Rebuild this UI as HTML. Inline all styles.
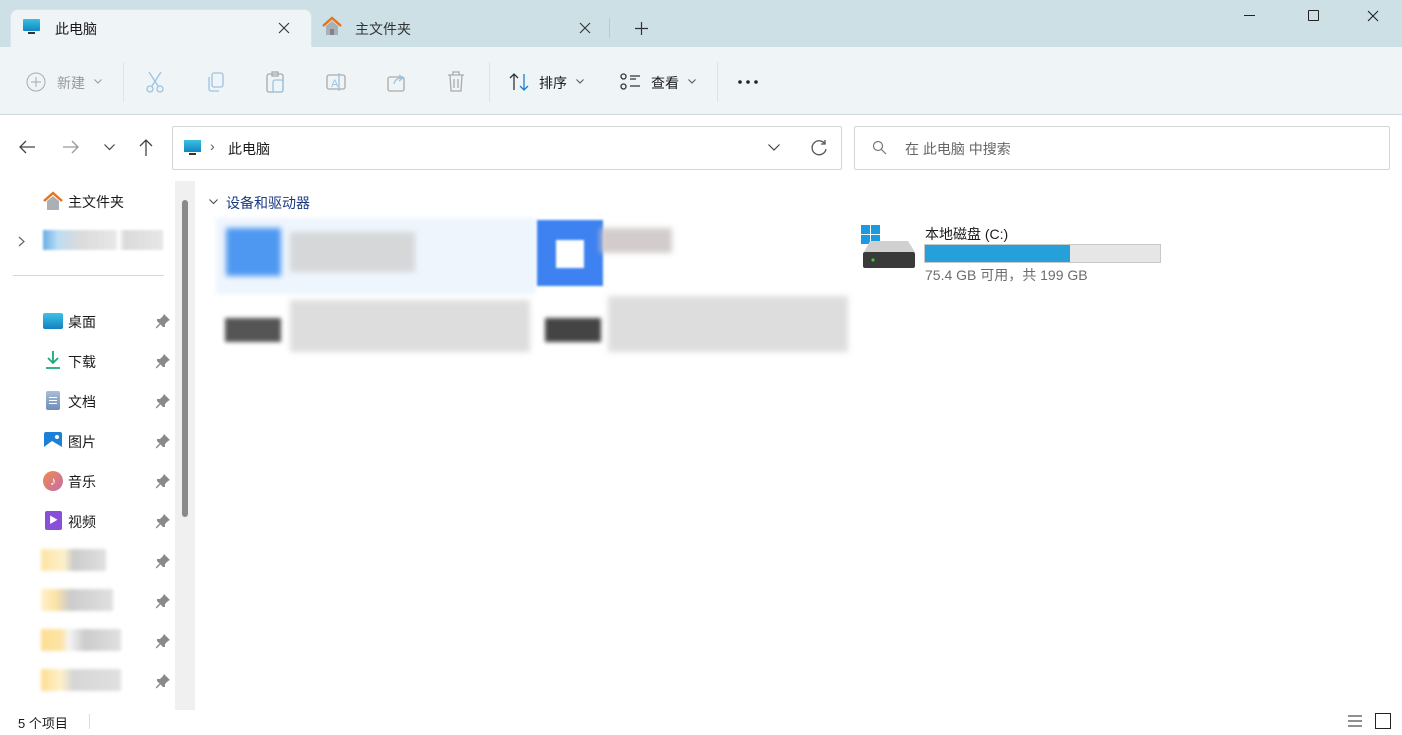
<!DOCTYPE html>
<html><head><meta charset="utf-8"><style>
*{margin:0;padding:0;box-sizing:border-box}
body{width:1402px;height:735px;overflow:hidden;background:#fff;font-family:"Liberation Sans","Noto Sans CJK SC",sans-serif;font-size:14px;color:#1a1a1a;position:relative}
.a{position:absolute}
.blk{position:absolute}
</style></head><body>
<div class="a" style="left:0;top:0;width:1402px;height:47px;background:#cde0e6"></div>
<div class="a" style="left:10px;top:9px;width:302px;height:38px;background:#eff4f7;border-radius:8px 8px 0 0;border:1px solid #d9e4ea;border-bottom:none"></div>
<div class="a" style="left:23px;top:19px;width:17px;height:12px;background:linear-gradient(#3ac0e0,#1186c4);border-radius:1px"></div>
<div class="a" style="left:28px;top:32px;width:7px;height:2px;background:#333"></div>
<div class="a" style="left:55px;top:19px;font-size:14px">此电脑</div>
<svg class="a" style="left:278px;top:22px" width="12" height="12" stroke="#333" stroke-width="1.1"><path d="M1 1L11 11M11 1L1 11"/></svg>
<svg class="a" style="left:321px;top:16px" width="22" height="20"><path d="M2 10 L11 2 L20 10" fill="none" stroke="#e8731b" stroke-width="2.5"/><path d="M5 10 V19 H17 V10 L11 5 Z" fill="#aab0b5"/><rect x="9" y="13" width="4" height="6" fill="#7d858a"/></svg>
<div class="a" style="left:355px;top:19px;color:#333">主文件夹</div>
<svg class="a" style="left:579px;top:22px" width="12" height="12" stroke="#333" stroke-width="1.1"><path d="M1 1L11 11M11 1L1 11"/></svg>
<div class="a" style="left:609px;top:18px;width:1px;height:20px;background:#b8c8cf"></div>
<svg class="a" style="left:635px;top:22px" width="13" height="13" stroke="#333" stroke-width="1.2"><path d="M6.5 0V13M0 6.5H13"/></svg>
<div class="a" style="left:1244px;top:15px;width:11px;height:1px;background:#222"></div>
<div class="a" style="left:1308px;top:10px;width:11px;height:11px;border:1px solid #222;border-radius:1px"></div>
<svg class="a" style="left:1367px;top:10px" width="12" height="12" stroke="#222" stroke-width="1.1"><path d="M1 1L11 11M11 1L1 11"/></svg>
<div class="a" style="left:0;top:47px;width:1402px;height:68px;background:#eff4f7;border-bottom:1px solid #cfd8dc"></div>
<svg class="a" style="left:26px;top:72px" width="20" height="20"><circle cx="10" cy="10" r="9" fill="none" stroke="#aaa"/><path d="M10 5V15M5 10H15" stroke="#aaa"/></svg>
<div class="a" style="left:57px;top:73px;color:#999">新建</div>
<svg class="a" style="left:94px;top:79px" width="8" height="5" fill="none" stroke="#999"><path d="M0.5 0.5L4 4L7.5 0.5"/></svg>
<div class="a" style="left:123px;top:62px;width:1px;height:40px;background:#dde3e6"></div>
<svg class="a" style="left:145px;top:70px" width="20" height="24" fill="none" stroke="#9cc3e0" stroke-width="1.3"><path d="M4 2L13 16M16 2L7 16"/><circle cx="5" cy="19" r="3"/><circle cx="15" cy="19" r="3"/></svg>
<svg class="a" style="left:205px;top:71px" width="22" height="22" fill="none" stroke="#9cc3e0" stroke-width="1.3"><rect x="7" y="2" width="11" height="14" rx="2"/><path d="M4 6V18a2 2 0 0 0 2 2H14"/></svg>
<svg class="a" style="left:265px;top:70px" width="22" height="24" fill="none" stroke="#aaa" stroke-width="1.3"><rect x="2" y="4" width="16" height="18" rx="2"/><rect x="7" y="2" width="6" height="4"/><rect x="8" y="10" width="10" height="12" rx="2" stroke="#9cc3e0"/></svg>
<svg class="a" style="left:325px;top:70px" width="22" height="24" fill="none" stroke="#aaa" stroke-width="1.3"><rect x="2" y="5" width="18" height="14" rx="2"/><text x="6" y="17" font-size="11" fill="#9cc3e0" stroke="none" font-family="Liberation Sans">A</text><path d="M14 3V21" stroke="#9cc3e0"/></svg>
<svg class="a" style="left:386px;top:71px" width="22" height="22" fill="none" stroke="#aaa" stroke-width="1.3"><rect x="2" y="6" width="16" height="14" rx="2"/><path d="M8 13C9 8 13 7 16 7M13 4L17 7L13 10" stroke="#9cc3e0"/></svg>
<svg class="a" style="left:446px;top:70px" width="20" height="24" fill="none" stroke="#aaa" stroke-width="1.3"><path d="M2 5H18M7 5V2H13V5M4 5L5 21H15L16 5M8 9V18M12 9V18"/></svg>
<div class="a" style="left:489px;top:62px;width:1px;height:40px;background:#dde3e6"></div>
<svg class="a" style="left:508px;top:72px" width="24" height="20" fill="none" stroke-width="1.3"><path d="M6 18V2M2 6L6 2L10 6" stroke="#333"/><path d="M16 2V18M12 14L16 18L20 14" stroke="#1a7fd4"/></svg>
<div class="a" style="left:539px;top:73px">排序</div>
<svg class="a" style="left:576px;top:79px" width="8" height="5" fill="none" stroke="#555"><path d="M0.5 0.5L4 4L7.5 0.5"/></svg>
<svg class="a" style="left:620px;top:72px" width="22" height="20" fill="none" stroke="#333" stroke-width="1.3"><rect x="1" y="2" width="5" height="5" rx="2.5"/><rect x="1" y="12" width="5" height="5" rx="2.5"/><path d="M10 4H20M10 14H20M10 7H16"/></svg>
<div class="a" style="left:651px;top:73px">查看</div>
<svg class="a" style="left:688px;top:79px" width="8" height="5" fill="none" stroke="#555"><path d="M0.5 0.5L4 4L7.5 0.5"/></svg>
<div class="a" style="left:717px;top:62px;width:1px;height:40px;background:#dde3e6"></div>
<svg class="a" style="left:737px;top:79px" width="22" height="6" fill="#222"><circle cx="3" cy="3" r="1.8"/><circle cx="11" cy="3" r="1.8"/><circle cx="19" cy="3" r="1.8"/></svg>
<svg class="a" style="left:18px;top:139px" width="18" height="16" fill="none" stroke="#444" stroke-width="1.3"><path d="M17 8H2M8 2L2 8L8 14"/></svg>
<svg class="a" style="left:62px;top:139px" width="18" height="16" fill="none" stroke="#999" stroke-width="1.3"><path d="M1 8H16M10 2L16 8L10 14"/></svg>
<svg class="a" style="left:104px;top:144px" width="11" height="7" fill="none" stroke="#444" stroke-width="1.2"><path d="M0.5 0.5L5.5 5.5L10.5 0.5"/></svg>
<svg class="a" style="left:138px;top:138px" width="16" height="18" fill="none" stroke="#444" stroke-width="1.3"><path d="M8 18V2M2 8L8 2L14 8"/></svg>
<div class="a" style="left:172px;top:126px;width:670px;height:44px;border:1px solid #d5d5d5;border-radius:2px"></div>
<div class="a" style="left:184px;top:140px;width:17px;height:12px;background:linear-gradient(#3ac0e0,#1186c4)"></div>
<div class="a" style="left:189px;top:153px;width:7px;height:2px;background:#333"></div>
<div class="a" style="left:210px;top:138px;color:#555">›</div>
<div class="a" style="left:228px;top:139px">此电脑</div>
<svg class="a" style="left:768px;top:144px" width="12" height="7" fill="none" stroke="#444" stroke-width="1.2"><path d="M0.5 0.5L6 6L11.5 0.5"/></svg>
<svg class="a" style="left:809px;top:138px" width="20" height="20" fill="none" stroke="#555" stroke-width="1.3"><path d="M16 6A7 7 0 1 0 17 11M16 2V6H12"/></svg>
<div class="a" style="left:854px;top:126px;width:536px;height:44px;border:1px solid #d5d5d5;border-radius:2px"></div>
<svg class="a" style="left:872px;top:140px" width="16" height="16" fill="none" stroke="#777" stroke-width="1.2"><circle cx="6" cy="6" r="4.5"/><path d="M9.5 9.5L14 14"/></svg>
<div class="a" style="left:905px;top:139px;color:#666">在 此电脑 中搜索</div>
<svg class="a" style="left:42px;top:191px" width="22" height="20"><path d="M2 10 L11 2 L20 10" fill="none" stroke="#e8731b" stroke-width="2.5"/><path d="M5 10 V19 H17 V10 L11 5 Z" fill="#aab0b5"/></svg>
<div class="a" style="left:68px;top:192px">主文件夹</div>
<svg class="a" style="left:18px;top:236px" width="7" height="11" fill="none" stroke="#666" stroke-width="1.2"><path d="M1 1L6 5.5L1 10"/></svg>
<div class="blk" style="left:43px;top:230px;width:120px;height:20px;background:linear-gradient(90deg,#2a8ce0 0,#9fcff0 12%,#ccc 30%,#ddd 60%,#fff 63%,#ccc 68%,#ddd 100%);opacity:.7;filter:blur(1px)"></div>
<div class="a" style="left:13px;top:275px;width:151px;height:1px;background:#d8d8d8"></div>
<div class="a" style="left:175px;top:181px;width:20px;height:529px;background:#f0f0f0"></div>
<div class="a" style="left:182px;top:200px;width:6px;height:317px;background:#8a8a8a;border-radius:3px"></div>
<div class="a" style="left:43px;top:313px;width:20px;height:16px;background:linear-gradient(#3cc3e6,#1580c0);border-radius:2px"></div>
<div class="a" style="left:68px;top:312px">桌面</div>
<svg class="a" style="left:45px;top:350px" width="16" height="20" fill="none" stroke="#1aa87d" stroke-width="1.8"><path d="M8 1V13M3 8L8 13L13 8M1 18H15"/></svg>
<div class="a" style="left:68px;top:352px">下载</div>
<div class="a" style="left:46px;top:391px;width:14px;height:19px;background:linear-gradient(#a8bcd6,#6f8db8);border-radius:2px"></div>
<div class="a" style="left:49px;top:397px;width:8px;height:1px;background:#fff;box-shadow:0 3px 0 #fff,0 6px 0 #fff"></div>
<div class="a" style="left:68px;top:392px">文档</div>
<svg class="a" style="left:44px;top:432px" width="18" height="18"><rect width="18" height="18" rx="2" fill="#1d80d8"/><path d="M0 15L8 9L18 15V18H0Z" fill="#fff"/><circle cx="13" cy="5" r="2" fill="#fff"/></svg>
<div class="a" style="left:68px;top:432px">图片</div>
<div class="a" style="left:43px;top:471px;width:20px;height:20px;background:linear-gradient(135deg,#ef8a50,#c46ea8);border-radius:50%;color:#fff;font-size:12px;text-align:center;line-height:20px">♪</div>
<div class="a" style="left:68px;top:472px">音乐</div>
<div class="a" style="left:45px;top:511px;width:17px;height:19px;background:#8a4fd8;border-radius:2px;color:#fff;font-size:9px;text-align:center;line-height:19px">▶</div>
<div class="a" style="left:68px;top:512px">视频</div>
<div class="blk" style="left:41px;top:549px;width:65px;height:22px;background:linear-gradient(90deg,#fcd26a 0,#fde7a8 35%,#aaa 50%,#ccc 100%);opacity:.6;filter:blur(1.5px)"></div>
<div class="blk" style="left:41px;top:589px;width:72px;height:22px;background:linear-gradient(90deg,#fde7a8 0,#fcd26a 20%,#aaa 40%,#ccc 100%);opacity:.6;filter:blur(1.5px)"></div>
<div class="blk" style="left:41px;top:629px;width:80px;height:22px;background:linear-gradient(90deg,#fcc84a 0,#fcd26a 25%,#eee 35%,#aaa 55%,#ccc 100%);opacity:.6;filter:blur(1.5px)"></div>
<div class="blk" style="left:41px;top:669px;width:80px;height:22px;background:linear-gradient(90deg,#fcc84a 0,#fde7a8 25%,#bbb 40%,#ccc 100%);opacity:.6;filter:blur(1.5px)"></div>
<svg class="a" style="left:156px;top:314px" width="14" height="380" fill="#8a8a8a">
<defs><g id="pin"><path d="M8 0L14 6L12 7L9 10L9 13L7 13L1 7L1 5L4 5L7 2Z"/><path d="M4 10L0 14" stroke="#8a8a8a" stroke-width="1.5"/></g></defs>
<use href="#pin" y="0"/><use href="#pin" y="40"/><use href="#pin" y="80"/><use href="#pin" y="120"/><use href="#pin" y="160"/><use href="#pin" y="200"/><use href="#pin" y="240"/><use href="#pin" y="280"/><use href="#pin" y="320"/><use href="#pin" y="360"/>
</svg>
<svg class="a" style="left:209px;top:199px" width="9" height="6" fill="none" stroke="#444"><path d="M0.5 0.5L4.5 4.5L8.5 0.5"/></svg>
<div class="a" style="left:226px;top:193px;color:#1a3a80;font-size:14px">设备和驱动器</div>
<div class="blk" style="left:216px;top:218px;width:320px;height:76px;background:#eef5fd;filter:blur(2px)"></div>
<div class="blk" style="left:226px;top:228px;width:55px;height:48px;background:#3d8ef0;filter:blur(3px);opacity:.9"></div>
<div class="blk" style="left:290px;top:232px;width:125px;height:40px;background:#d0d0d0;filter:blur(3px);opacity:.8"></div>
<div class="blk" style="left:537px;top:220px;width:66px;height:66px;background:#3d82f0;filter:blur(1px)"></div>
<div class="blk" style="left:556px;top:240px;width:28px;height:28px;background:#fff;filter:blur(1px)"></div>
<div class="blk" style="left:600px;top:228px;width:72px;height:25px;background:#c8c0c0;filter:blur(3px);opacity:.8"></div>
<div class="blk" style="left:225px;top:318px;width:56px;height:24px;background:#555;filter:blur(2px)"></div>
<div class="blk" style="left:290px;top:300px;width:240px;height:52px;background:#ddd;filter:blur(3px)"></div>
<div class="blk" style="left:545px;top:318px;width:56px;height:24px;background:#444;filter:blur(2px)"></div>
<div class="blk" style="left:608px;top:296px;width:240px;height:56px;background:#ddd;filter:blur(3px)"></div>
<svg class="a" style="left:860px;top:224px" width="56" height="46"><rect x="1" y="1" width="9" height="9" fill="#1a9ae0"/><rect x="11" y="1" width="9" height="9" fill="#1a9ae0"/><rect x="1" y="11" width="9" height="9" fill="#1a9ae0"/><rect x="11" y="11" width="9" height="9" fill="#1a9ae0"/><path d="M4 28 L10 17 H48 L55 28 Z" fill="#d0d0d0"/><rect x="3" y="28" width="52" height="16" rx="2" fill="#3a3a3a"/><circle cx="13" cy="36" r="1.6" fill="#3c3"/></svg>
<div class="a" style="left:925px;top:224px">本地磁盘 (C:)</div>
<div class="a" style="left:924px;top:244px;width:237px;height:19px;background:#e6e6e6;border:1px solid #c8c8c8"></div>
<div class="a" style="left:925px;top:245px;width:145px;height:17px;background:#26a0da"></div>
<div class="a" style="left:925px;top:265px;color:#6d6d6d">75.4 GB 可用，共 199 GB</div>
<div class="a" style="left:18px;top:713px;font-size:13px">5 个项目</div>
<div class="a" style="left:89px;top:714px;width:1px;height:15px;background:#ddd"></div>
<svg class="a" style="left:1347px;top:714px" width="16" height="14" stroke="#222"><path d="M1 2H15M1 7H15M1 12H15"/></svg>
<div class="a" style="left:1375px;top:713px;width:16px;height:16px;border:1px solid #222;background:#fff"></div>
</body></html>
